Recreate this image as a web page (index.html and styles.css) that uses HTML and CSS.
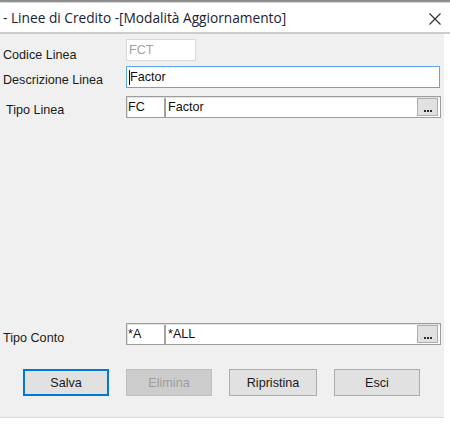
FILE: index.html
```html
<!DOCTYPE html>
<html lang="it">
<head>
<meta charset="utf-8">
<title>Linee di Credito</title>
<link rel="stylesheet" href="styles.css">
</head>
<body>
<div class="window">
  <div class="topline"></div>
  <div class="titlebar">
    <span class="title">- Linee di Credito -[Modalità Aggiornamento]</span>
    <svg class="close" width="12" height="12" viewBox="0 0 12 12"><path d="M0.5 0.5 L11.5 11.5 M11.5 0.5 L0.5 11.5" stroke="#2b2b2b" stroke-width="1.1" fill="none"/></svg>
  </div>
  <div class="form">
    <div class="row row-1">
      <label class="lbl lbl-1">Codice Linea</label>
      <div class="input input-short disabled">FCT</div>
    </div>
    <div class="row row-2">
      <label class="lbl lbl-2">Descrizione Linea</label>
      <div class="input input-long focused"><span class="caret"></span>Factor</div>
    </div>
    <div class="row row-3">
      <label class="lbl lbl-3">Tipo Linea</label>
      <div class="lookup">
        <span class="code">FC</span>
        <span class="bar"></span>
        <span class="desc">Factor</span>
        <span class="dots" title="..."><i></i><i></i><i></i></span>
      </div>
    </div>
    <div class="row row-4">
      <label class="lbl lbl-4">Tipo Conto</label>
      <div class="lookup">
        <span class="code">*A</span>
        <span class="bar"></span>
        <span class="desc">*ALL</span>
        <span class="dots" title="..."><i></i><i></i><i></i></span>
      </div>
    </div>
    <div class="buttons">
      <button class="btn btn-default">Salva</button>
      <button class="btn btn-disabled">Elimina</button>
      <button class="btn btn-wide">Ripristina</button>
      <button class="btn">Esci</button>
    </div>
  </div>
  <div class="bottom"></div>
</div>
</body>
</html>
```
FILE: styles.css
```css
html, body {
  margin: 0;
  padding: 0;
  background: #ffffff;
}
.window {
  width: 450px;
  height: 424px;
  display: flex;
  flex-direction: column;
  font-family: "Liberation Sans", Arial, sans-serif;
  font-size: 12.6px;
  color: #1a1a1a;
}
.topline {
  height: 2px;
  background: #8f8f8f;
  border-bottom: 1px solid #d6d6d6;
}
.titlebar {
  height: 29px;
  background: #ffffff;
  border-bottom: 2px solid #cdcdcd;
  display: flex;
  align-items: center;
  padding-left: 3px;
  padding-right: 9px;
}
.title {
  font-family: "Open Sans", "Noto Sans", sans-serif;
  font-size: 13.7px;
  color: #1a2231;
  flex: 1;
  padding-bottom: 1px;
}
.close {
  display: block;
  margin-top: 2px;
}
.form {
  width: 444px;
  height: 383px;
  box-sizing: border-box;
  background: #f0f0f0;
  display: flex;
  flex-direction: column;
  padding: 5px 0 0 3px;
}
.row {
  display: flex;
  align-items: flex-start;
  height: 22px;
}
.row-2 { margin-top: 5px; }
.row-3 { margin-top: 8px; }
.row-4 { margin-top: auto; }
.lbl {
  width: 123px;
  line-height: 14px;
}
.lbl-1 { padding-top: 9px; }
.lbl-2 { padding-top: 7px; }
.lbl-3 { padding-top: 7px; padding-left: 3px; width: 120px; }
.lbl-4 { padding-top: 8px; }
.input {
  box-sizing: border-box;
  height: 22px;
  background: #ffffff;
  border: 1px solid #7a7a7a;
  padding-left: 2px;
  line-height: 18px;
  display: flex;
  align-items: center;
}
.input-short { width: 70px; }
.input-long { width: 314px; }
.disabled {
  border-color: #d9d9d9;
  color: #a3a3a3;
}
.focused {
  border-color: #5ea6e8;
  color: #111111;
}
.caret {
  width: 1px;
  height: 15px;
  background: #111111;
}
.lookup {
  box-sizing: border-box;
  width: 315px;
  height: 22px;
  background: #ffffff;
  border: 1px solid #9d9d9d;
  box-shadow: inset 1px 1px 0 #e2e2e2;
  display: flex;
  align-items: center;
  color: #111111;
}
.code {
  width: 36px;
  padding-left: 1px;
}
.bar {
  width: 2px;
  height: 19px;
  background: #a3a3a3;
  margin-right: 2px;
}
.desc {
  flex: 1;
}
.dots {
  box-sizing: border-box;
  width: 21px;
  height: 18px;
  margin-right: 2px;
  background: #e1e1e1;
  border: 1px solid #adadad;
  display: flex;
  justify-content: center;
  align-items: flex-end;
  gap: 1px;
  padding-bottom: 3px;
}
.dots i {
  display: block;
  width: 2px;
  height: 2px;
  background: #2a2a2a;
}
.buttons {
  display: flex;
  gap: 17px;
  margin-top: 24px;
  margin-bottom: 21px;
  padding-left: 20px;
}
.btn {
  box-sizing: border-box;
  width: 86px;
  height: 27px;
  margin: 0;
  padding: 0;
  background: #e1e1e1;
  border: 1px solid #adadad;
  font-family: "Liberation Sans", Arial, sans-serif;
  font-size: 12.6px;
  color: #1a1a1a;
}
.btn-default {
  border: 2px solid #0078d7;
}
.btn-disabled {
  background: #cccccc;
  border-color: #bfbfbf;
  color: #9d9d9d;
}
.btn-wide { width: 88px; }
.bottom {
  height: 1px;
  width: 444px;
  background: #dadada;
}
```
